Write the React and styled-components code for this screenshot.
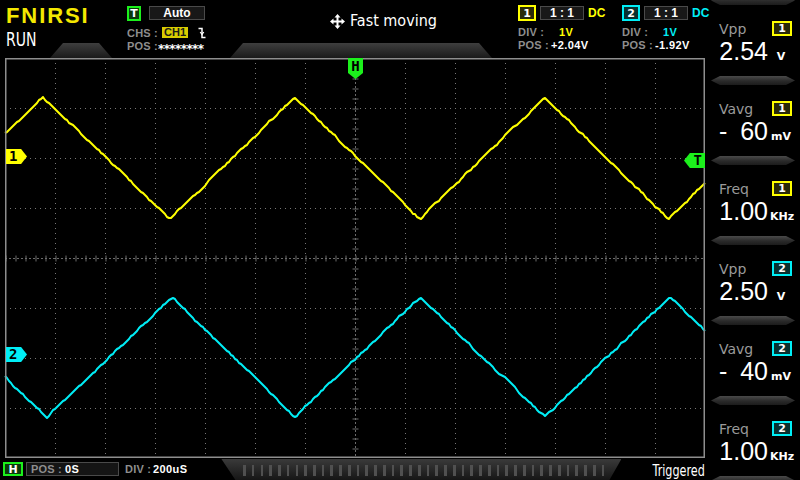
import React from 'react';
import styled, { createGlobalStyle } from 'styled-components';

const YELLOW = '#ffff00';
const CYAN = '#00eef6';
const GREEN = '#1cf01c';
const GRAY = '#8e8e8e';

const GlobalStyle = createGlobalStyle`
  html, body { margin: 0; padding: 0; background: #000; }
  body { font-family: 'Liberation Sans', 'DejaVu Sans', sans-serif; }
`;

// seeded noise so the traces look like a real capture
const makeRand = (seed) => {
  let s = seed;
  return () => {
    s = (s * 16807) % 2147483647;
    return s / 2147483647;
  };
};

const buildTrace = (verts, seed) => {
  const r = makeRand(seed);
  const pts = [];
  let drift = 0;
  for (let x = 0; x <= 700; x += 2) {
    let i = 0;
    while (verts[i + 1][0] < x) i++;
    const [x0, y0] = verts[i];
    const [x1, y1] = verts[i + 1];
    const y = y0 + ((y1 - y0) * (x - x0)) / (x1 - x0);
    drift = drift * 0.6 + (r() - 0.5) * 1.6;
    pts.push(`${x},${Math.round(y + drift)}`);
  }
  return pts.join(' ');
};

const ch1Trace = buildTrace(
  [[-87, 161], [38, 39], [165, 161], [290, 39], [415, 161], [540, 39], [663, 161], [790, 39]],
  7
);
const ch2Trace = buildTrace(
  [[-83, 239], [42, 359], [167, 239], [290, 359], [415, 239], [540, 359], [665, 239], [790, 359]],
  13
);

const measures = [
  { label: 'Vpp', ch: 1, sign: '', value: '2.54', unit: 'V' },
  { label: 'Vavg', ch: 1, sign: '-', value: '60', unit: 'mV' },
  { label: 'Freq', ch: 1, sign: '', value: '1.00', unit: 'KHz' },
  { label: 'Vpp', ch: 2, sign: '', value: '2.50', unit: 'V' },
  { label: 'Vavg', ch: 2, sign: '-', value: '40', unit: 'mV' },
  { label: 'Freq', ch: 2, sign: '', value: '1.00', unit: 'KHz' },
];

const chColor = { 1: YELLOW, 2: CYAN };
const chFill = { 1: '#2a2a08', 2: '#073030' };

const MoveIcon = () => (
  <svg width="15" height="15" viewBox="0 0 15 15">
    <path d="M7.5 2 V13 M2 7.5 H13" stroke="#fff" strokeWidth="2" />
    <path d="M7.5 0 L10.5 3.5 H4.5 Z M7.5 15 L10.5 11.5 H4.5 Z M0 7.5 L3.5 4.5 V10.5 Z M15 7.5 L11.5 4.5 V10.5 Z" fill="#fff" />
  </svg>
);

const EdgeIcon = () => (
  <svg width="8" height="12" viewBox="0 0 8 12">
    <path d="M0.5 1.5 H4 V10.5 H7.5" stroke="#fff" strokeWidth="1.5" fill="none" />
    <path d="M2.2 5 L4 7.5 L5.8 5" stroke="#fff" strokeWidth="1.2" fill="none" />
  </svg>
);

const Graticule = () => {
  const vx = [];
  for (let x = 50; x < 700; x += 50) if (x !== 350) vx.push(x);
  const hy = [];
  for (let y = 50; y < 400; y += 50) if (y !== 200) hy.push(y);
  return (
    <PlotSvg viewBox="0 0 700 400">
      {vx.map((x) => (
        <line key={`v${x}`} x1={x + 0.5} y1="5" x2={x + 0.5} y2="400" stroke="#777" strokeDasharray="1 4" />
      ))}
      {hy.map((y) => (
        <line key={`h${y}`} x1="5" y1={y + 0.5} x2="700" y2={y + 0.5} stroke="#777" strokeDasharray="1 4" />
      ))}
      <line x1="350.5" y1="0" x2="350.5" y2="400" stroke="#6a6a6a" strokeDasharray="2 2" />
      <line x1="0" y1="200.5" x2="700" y2="200.5" stroke="#6a6a6a" strokeDasharray="2 2" />
      <line x1="350.5" y1="0.5" x2="350.5" y2="400" stroke="#6a6a6a" strokeWidth="6" strokeDasharray="1 9" />
      <line x1="0.5" y1="200.5" x2="700" y2="200.5" stroke="#6a6a6a" strokeWidth="6" strokeDasharray="1 9" />
      <polyline points={ch1Trace} fill="none" stroke={YELLOW} strokeWidth="2" strokeLinejoin="round" />
      <polyline points={ch2Trace} fill="none" stroke={CYAN} strokeWidth="2" strokeLinejoin="round" />
      <rect x="0.75" y="0.75" width="698.5" height="398.5" fill="none" stroke={GRAY} strokeWidth="1.5" />
    </PlotSvg>
  );
};

export default function App() {
  return (
    <>
      <GlobalStyle />
      <Screen>
        <Main>
          <Header>
            <TabStrip>
              <Tab $offset={50} $width={62} />
              <Tab $offset={118} $width={262} />
            </TabStrip>
            <HeaderContent>
              <Brand>
                <Logo>FNIRSI</Logo>
                <RunState>RUN</RunState>
              </Brand>
              <TrigInfo>
                <Row>
                  <Badge $border={GREEN} $fill="#0b3a0b" $w={14} $h={15}>T</Badge>
                  <ValueBox $w={56} $gap={8}>Auto</ValueBox>
                </Row>
                <Row $top={6}>
                  <Key $w={36}>CHS :</Key>
                  <ChTag>CH1</ChTag>
                  <IconSlot><EdgeIcon /></IconSlot>
                </Row>
                <Row $top={2}>
                  <Key $w={31}>POS :</Key>
                  <Stars>********</Stars>
                </Row>
              </TrigInfo>
              <Message>
                <MoveIcon />
                <MessageText>Fast moving</MessageText>
              </Message>
              <ChInfo $w={104}>
                <Row>
                  <Badge $border={YELLOW} $fill={chFill[1]} $w={18} $h={16}>1</Badge>
                  <ValueBox $w={44} $gap={4}>1 : 1</ValueBox>
                  <Coupling $color={YELLOW}>DC</Coupling>
                </Row>
                <Row $top={5}>
                  <Key $w={41}>DIV :</Key>
                  <Val $color={YELLOW}>1V</Val>
                </Row>
                <Row $top={2}>
                  <Key $w={33}>POS :</Key>
                  <Val $color="#fff">+2.04V</Val>
                </Row>
              </ChInfo>
              <ChInfo>
                <Row>
                  <Badge $border={CYAN} $fill={chFill[2]} $w={18} $h={16}>2</Badge>
                  <ValueBox $w={44} $gap={4}>1 : 1</ValueBox>
                  <Coupling $color={CYAN}>DC</Coupling>
                </Row>
                <Row $top={5}>
                  <Key $w={41}>DIV :</Key>
                  <Val $color={CYAN}>1V</Val>
                </Row>
                <Row $top={2}>
                  <Key $w={33}>POS :</Key>
                  <Val $color="#fff">-1.92V</Val>
                </Row>
              </ChInfo>
            </HeaderContent>
          </Header>

          <Plot>
            <Graticule />
            <Marker $color={YELLOW} $dir="right" style={{ left: 1, top: 91 }}>1</Marker>
            <Marker $color={CYAN} $dir="right" style={{ left: 1, top: 289 }}>2</Marker>
            <Marker $color={GREEN} $dir="left" style={{ right: 0, top: 95 }}>T</Marker>
            <Marker $color={GREEN} $dir="down" style={{ left: 343, top: 0 }}>H</Marker>
          </Plot>

          <Footer>
            <Badge $border={GREEN} $fill="#0b3a0b" $w={20} $h={14} $left={3}>H</Badge>
            <PosBox>
              <Key $w={34}>POS :</Key>
              <Val $color="#fff">0S</Val>
            </PosBox>
            <DivField>
              <Key $w={28}>DIV :</Key>
              <Val $color="#fff">200uS</Val>
            </DivField>
            <TickBand />
            <Status>Triggered</Status>
          </Footer>
        </Main>

        <Panel>
          <Separator />
          {measures.map((m, i) => (
            <React.Fragment key={i}>
              <Measure>
                <MeasureHead>
                  <MeasureLabel>{m.label}</MeasureLabel>
                  <Badge $border={chColor[m.ch]} $fill={chFill[m.ch]} $w={20} $h={15}>{m.ch}</Badge>
                </MeasureHead>
                <MeasureValue>
                  <Number>
                    {m.sign && <Sign>{m.sign}</Sign>}
                    {m.value}
                  </Number>
                  <Unit>{m.unit}</Unit>
                </MeasureValue>
              </Measure>
              <Separator />
            </React.Fragment>
          ))}
        </Panel>
      </Screen>
    </>
  );
}

const Screen = styled.div`
  width: 800px;
  height: 480px;
  background: #000;
  display: flex;
  overflow: hidden;
  color: #fff;
`;

const Main = styled.div`
  width: 705px;
  display: flex;
  flex-direction: column;
`;

const Header = styled.header`
  height: 58px;
  display: grid;
  grid-template: 1fr / 1fr;
`;

const TabStrip = styled.div`
  grid-area: 1 / 1;
  align-self: end;
  display: flex;
  height: 15px;
`;

const Tab = styled.div`
  margin-left: ${(p) => p.$offset}px;
  width: ${(p) => p.$width}px;
  height: 100%;
  background: linear-gradient(#3e3e3e, #1a1a1a);
  clip-path: polygon(13px 0, calc(100% - 13px) 0, 100% 100%, 0 100%);
`;

const HeaderContent = styled.div`
  grid-area: 1 / 1;
  display: flex;
  z-index: 1;
`;

const Brand = styled.div`
  width: 121px;
  padding: 5px 0 0 6px;
  display: flex;
  flex-direction: column;
  align-items: flex-start;
`;

const Logo = styled.div`
  font-family: 'Liberation Sans', sans-serif;
  font-weight: 700;
  font-size: 22px;
  line-height: 22px;
  letter-spacing: 1.9px;
  color: #f4e800;
`;

const RunState = styled.div`
  margin-top: 3px;
  font-family: 'DejaVu Sans', sans-serif;
  font-size: 19px;
  line-height: 19px;
  color: #fff;
  transform: scaleX(0.74);
  transform-origin: left center;
`;

const TrigInfo = styled.div`
  width: 203px;
  padding-top: 5px;
`;

const ChInfo = styled.div`
  width: ${(p) => (p.$w ? `${p.$w}px` : 'auto')};
  padding: 5px 0 0 0;
`;

const Row = styled.div`
  display: flex;
  align-items: center;
  margin-top: ${(p) => p.$top || 0}px;
  height: ${(p) => (p.$top ? 11 : 16)}px;
`;

const Badge = styled.span`
  box-sizing: border-box;
  width: ${(p) => p.$w}px;
  height: ${(p) => p.$h}px;
  margin-left: ${(p) => p.$left || 0}px;
  border: 2px solid ${(p) => p.$border};
  background: ${(p) => p.$fill};
  display: flex;
  align-items: center;
  justify-content: center;
  font-family: 'DejaVu Sans', sans-serif;
  font-weight: 700;
  font-size: 11px;
  color: #fff;
  flex-shrink: 0;
`;

const ValueBox = styled.span`
  box-sizing: border-box;
  width: ${(p) => p.$w}px;
  height: 14px;
  margin-left: ${(p) => p.$gap}px;
  border: 1px solid #4a4a4a;
  background: #181818;
  display: flex;
  align-items: center;
  justify-content: center;
  font-weight: 700;
  font-size: 12px;
  color: #fff;
`;

const Coupling = styled.span`
  margin-left: 4px;
  font-weight: 700;
  font-size: 12px;
  color: ${(p) => p.$color};
`;

const Key = styled.span`
  width: ${(p) => p.$w}px;
  flex-shrink: 0;
  font-weight: 700;
  font-size: 11px;
  letter-spacing: 0.2px;
  color: ${GRAY};
  white-space: pre;
`;

const Val = styled.span`
  font-weight: 700;
  font-size: 11px;
  letter-spacing: 0.4px;
  color: ${(p) => p.$color};
`;

const Stars = styled.span`
  position: relative;
  top: 3px;
  font-family: 'DejaVu Sans', sans-serif;
  font-weight: 700;
  font-size: 12px;
  letter-spacing: -0.6px;
  color: #fff;
`;

const ChTag = styled.span`
  margin-left: -1px;
  padding: 0 2px;
  height: 11px;
  line-height: 11px;
  background: #d8cc00;
  color: #1a1a1a;
  font-weight: 700;
  font-size: 11px;
`;

const IconSlot = styled.span`
  margin-left: 10px;
  display: flex;
`;

const Message = styled.div`
  width: 188px;
  padding-top: 14px;
  display: flex;
  align-items: flex-start;
  gap: 5px;
`;

const MessageText = styled.span`
  font-family: 'DejaVu Sans', sans-serif;
  font-stretch: condensed;
  font-size: 16px;
  line-height: 16px;
  margin-top: -1px;
  color: #fff;
`;

const Plot = styled.div`
  position: relative;
  margin-left: 5px;
  width: 700px;
  height: 400px;
`;

const PlotSvg = styled.svg`
  display: block;
  width: 700px;
  height: 400px;
  overflow: visible;
`;

const shapes = {
  right: 'polygon(0 0, 72% 0, 100% 50%, 72% 100%, 0 100%)',
  left: 'polygon(28% 0, 100% 0, 100% 100%, 28% 100%, 0 50%)',
  down: 'polygon(0 0, 100% 0, 100% 72%, 50% 100%, 0 72%)',
};

const Marker = styled.div`
  position: absolute;
  width: ${(p) => (p.$dir === 'down' ? 15 : 21)}px;
  height: ${(p) => (p.$dir === 'down' ? 21 : 15)}px;
  background: ${(p) => p.$color};
  clip-path: ${(p) => shapes[p.$dir]};
  display: flex;
  align-items: ${(p) => (p.$dir === 'down' ? 'flex-start' : 'center')};
  justify-content: ${(p) => (p.$dir === 'right' ? 'flex-start' : p.$dir === 'left' ? 'flex-end' : 'center')};
  padding: ${(p) => (p.$dir === 'right' ? '0 0 0 3px' : p.$dir === 'left' ? '0 3px 0 0' : '1px 0 0 0')};
  box-sizing: border-box;
  font-family: 'DejaVu Sans Mono', monospace;
  font-weight: 700;
  font-size: 14px;
  line-height: 15px;
  color: #000;
`;

const Footer = styled.footer`
  height: 22px;
  display: flex;
  align-items: center;
`;

const PosBox = styled.div`
  box-sizing: border-box;
  width: 93px;
  height: 14px;
  margin-left: 3px;
  padding-left: 4px;
  border: 1px solid #4a4a4a;
  background: #151515;
  display: flex;
  align-items: center;
`;

const DivField = styled.div`
  margin-left: 6px;
  display: flex;
  align-items: center;
`;

const TickBand = styled.div`
  margin-left: 34px;
  align-self: flex-end;
  width: 400px;
  height: 21px;
  clip-path: polygon(0 0, 100% 0, calc(100% - 12px) 100%, 14px 100%);
  background:
    repeating-linear-gradient(90deg, transparent 0 6px, #505050 6px 8.75px) 16px 6px / calc(100% - 30px) 11px no-repeat,
    linear-gradient(#3a3a3a, #161616);
`;

const Status = styled.span`
  margin-left: auto;
  font-family: 'DejaVu Sans', sans-serif;
  font-size: 16px;
  color: #fff;
  padding-top: 2px;
  transform: scaleX(0.7);
  transform-origin: right center;
`;

const Panel = styled.aside`
  width: 95px;
  margin-top: -4px;
  display: flex;
  flex-direction: column;
`;

const Separator = styled.div`
  height: 9px;
  margin: 0 5px 0 6px;
  flex-shrink: 0;
  background: linear-gradient(#4a4a4a, #2a2a2a 55%, #1c1c1c);
  clip-path: polygon(0 50%, 9px 0, calc(100% - 9px) 0, 100% 50%, calc(100% - 9px) 100%, 9px 100%);
`;

const Measure = styled.div`
  height: 71px;
  flex-shrink: 0;
  box-sizing: border-box;
  padding: 16px 8px 0 14px;
`;

const MeasureHead = styled.div`
  display: flex;
  align-items: center;
  justify-content: space-between;
  height: 15px;
`;

const MeasureLabel = styled.span`
  font-family: 'DejaVu Sans', sans-serif;
  font-size: 14px;
  color: #9a9a9a;
`;

const MeasureValue = styled.div`
  display: flex;
  align-items: baseline;
  margin-top: 1px;
`;

const Number = styled.span`
  width: 49px;
  display: block;
  text-align: right;
  font-family: 'Liberation Sans', sans-serif;
  font-size: 25px;
  line-height: 28px;
  color: #fff;
`;

const Sign = styled.span`
  float: left;
`;

const Unit = styled.span`
  width: 22px;
  margin-left: 2px;
  text-align: center;
  font-family: 'DejaVu Sans', sans-serif;
  font-weight: 700;
  font-size: 11px;
  color: #fff;
`;
